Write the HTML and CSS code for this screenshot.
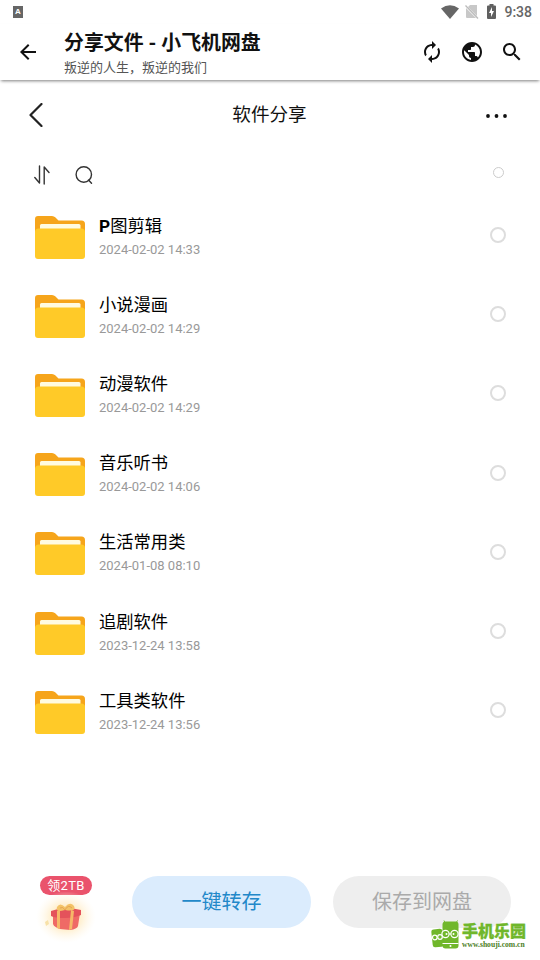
FILE: index.html
```html
<!DOCTYPE html>
<html lang="zh-CN">
<head>
<meta charset="utf-8">
<title>分享文件 - 小飞机网盘</title>
<link rel="stylesheet" href="styles.css">
</head>
<body>
<svg width="0" height="0" class="defs">
  <symbol id="folder" viewBox="0 0 50 43">
    <path fill="#f6a51b" d="M0 3Q0 0 3 0H17Q19 0 20.500 1.500L23.500 4.500H46.500Q50 4.500 50 8V30H0Z"/>
    <rect x="5" y="8" width="40.500" height="9" rx="1.500" fill="#fffbe0"/>
    <path fill="#ffca28" d="M0 16Q0 12.500 3.500 12.500H46.500Q50 12.500 50 16V40Q50 43 47 43H3Q0 43 0 40Z"/>
  </symbol>
</svg>
<div class="status">
  <span class="app-badge">A</span>
  <div class="status-right">
    <svg class="wifi" viewBox="0 0 18 14"><path fill="#666" d="M0 3.500Q9-3 18 3.500L9 14Z"/></svg>
    <svg class="sim" viewBox="0 0 14 15"><path fill="#c8c8c8" d="M5 1H12V12L3 3ZM1 4L11 14H2Q1 14 1 13Z"/><path stroke="#bbb" stroke-width="1.300" d="M.5 1.500L13 14.500"/></svg>
    <svg class="battery" viewBox="0 0 9 15"><path fill="#606060" d="M2.500 0H6.500V1.500H8Q9 1.500 9 2.500V14Q9 15 8 15H1Q0 15 0 14V2.500Q0 1.500 1 1.500H2.500Z"/><path fill="#fff" d="M5 3L2 9H4V13L7 7H5Z"/></svg>
    <span class="time">9:38</span>
  </div>
</div>
<header class="appbar">
  <svg class="back" viewBox="0 0 24 24"><path d="M20 11H7.830l5.590-5.590L12 4l-8 8 8 8 1.410-1.410L7.830 13H20v-2z"/></svg>
  <div class="titles">
    <h1>分享文件 - 小飞机网盘</h1>
    <p>叛逆的人生，叛逆的我们</p>
  </div>
  <div class="actions">
    <svg viewBox="0 0 24 24"><path d="M12 6v3l4-4-4-4v3c-4.420 0-8 3.580-8 8 0 1.570.46 3.030 1.240 4.260L6.700 14.800c-.45-.83-.7-1.790-.7-2.800 0-3.310 2.690-6 6-6zm6.760 1.740L17.300 9.200c.44.84.7 1.790.7 2.800 0 3.310-2.690 6-6 6v-3l-4 4 4 4v-3c4.420 0 8-3.580 8-8 0-1.570-.46-3.030-1.240-4.260z"/></svg>
    <svg viewBox="0 0 24 24"><path d="M12 2C6.480 2 2 6.480 2 12s4.480 10 10 10 10-4.480 10-10S17.520 2 12 2zm-1 17.930c-3.950-.49-7-3.850-7-7.930 0-.62.080-1.210.21-1.790L9 15v1c0 1.100.9 2 2 2v1.930zm6.900-2.540c-.26-.81-1-1.390-1.900-1.390h-1v-3c0-.55-.45-1-1-1H8v-2h2c.55 0 1-.45 1-1V7h2c1.100 0 2-.9 2-2v-.41c2.930 1.190 5 4.060 5 7.410 0 2.080-.8 3.970-2.100 5.390z"/></svg>
    <svg viewBox="0 0 24 24"><path d="M15.500 14h-.79l-.28-.27C15.410 12.590 16 11.110 16 9.500 16 5.910 13.090 3 9.500 3S3 5.910 3 9.500 5.910 16 9.500 16c1.610 0 3.090-.59 4.230-1.570l.27.280v.79l5 4.990L20.490 19l-4.990-5zm-6 0C7.010 14 5 11.990 5 9.500S7.010 5 9.500 5 14 7.010 14 9.500 11.990 14 9.500 14z"/></svg>
  </div>
</header>
<nav class="subnav">
  <svg class="chevron" viewBox="0 0 14 24"><path d="M12.500 1L1.500 12L12.500 23"/></svg>
  <h2>软件分享</h2>
  <svg class="more" viewBox="0 0 22 4"><circle cx="2" cy="2" r="1.900"/><circle cx="10.500" cy="2" r="1.900"/><circle cx="19" cy="2" r="1.900"/></svg>
</nav>
<div class="tools">
  <svg class="sort" viewBox="0 0 16 20"><path d="M5.500 1V18L.8 12.500M10.200 19V2L15 7.500"/></svg>
  <svg class="find" viewBox="0 0 18 18"><circle cx="8.800" cy="8.500" r="7.700"/><path d="M13.500 14L16.500 17.200"/></svg>
  <span class="radio small"></span>
</div>
<main class="list">
  <div class="row"><svg class="folder"><use href="#folder"/></svg><div class="info"><div class="name"><b>P</b>图剪辑</div><div class="date">2024-02-02 14:33</div></div><span class="radio"></span></div>
  <div class="row"><svg class="folder"><use href="#folder"/></svg><div class="info"><div class="name">小说漫画</div><div class="date">2024-02-02 14:29</div></div><span class="radio"></span></div>
  <div class="row"><svg class="folder"><use href="#folder"/></svg><div class="info"><div class="name">动漫软件</div><div class="date">2024-02-02 14:29</div></div><span class="radio"></span></div>
  <div class="row"><svg class="folder"><use href="#folder"/></svg><div class="info"><div class="name">音乐听书</div><div class="date">2024-02-02 14:06</div></div><span class="radio"></span></div>
  <div class="row"><svg class="folder"><use href="#folder"/></svg><div class="info"><div class="name">生活常用类</div><div class="date">2024-01-08 08:10</div></div><span class="radio"></span></div>
  <div class="row"><svg class="folder"><use href="#folder"/></svg><div class="info"><div class="name">追剧软件</div><div class="date">2023-12-24 13:58</div></div><span class="radio"></span></div>
  <div class="row"><svg class="folder"><use href="#folder"/></svg><div class="info"><div class="name">工具类软件</div><div class="date">2023-12-24 13:56</div></div><span class="radio"></span></div>
</main>
<footer class="bottom">
  <div class="gift">
    <span class="gift-tag">领2TB</span>
    <svg class="gift-box" viewBox="0 0 60 52">
      <defs><radialGradient id="glow"><stop offset="0" stop-color="#ffd98c"/><stop offset=".55" stop-color="#ffeecb" stop-opacity=".75"/><stop offset="1" stop-color="#fff8ea" stop-opacity="0"/></radialGradient></defs>
      <ellipse cx="30" cy="25" rx="30" ry="26" fill="url(#glow)"/>
      <g transform="translate(0 2)">
      <path fill="#ef6a66" d="M17 20L44 19L42 32Q41 35 34 36L24 35Q18 33 17 30Z"/>
      <path fill="#e4525b" d="M15 17L29 13L45 16V21Q38 24 29 24Q19 24 15 22Z"/>
      <path fill="#f6b868" d="M21 17L24 16L24 35L21 34ZM35 16L38 17L36 35L33 36Z"/>
      <path fill="#f3c368" d="M29 16Q19 19 21 13Q24 8 29 13Q34 7 38 12Q41 18 29 16Z"/>
      <path fill="none" stroke="#e7a552" d="M24 14Q27 12 29 16Q32 10 36 14"/>
      <path fill="#f8e1a8" d="M9 28L12 26L13 30L10 32Z"/>
      </g>
    </svg>
  </div>
  <button class="primary">一键转存</button>
  <button class="disabled">保存到网盘</button>
</footer>
<div class="watermark">
  <svg viewBox="0 0 30 30">
    <g fill="#70b72b">
      <path d="M14 3L13 .5M25 3L26.500 .5" stroke="#70b72b"/>
      <rect x="11.500" y="1.500" width="16" height="27" rx="3"/>
      <rect x="1" y="9" width="11" height="18" rx="2.500" transform="rotate(-6 7 18)"/>
    </g>
    <g fill="#70b72b" stroke="#fff" stroke-width="1.200"><circle cx="14.500" cy="14" r="3.600"/><circle cx="23.500" cy="14" r="3.600"/><circle cx="3.800" cy="17.500" r="2.300"/><circle cx="9" cy="17" r="2.300"/><path fill="none" d="M18 14H20M11.500 23.500H27.500"/></g>
    <circle cx="15.500" cy="14" r="1" fill="#fff"/><circle cx="22.500" cy="14" r="1" fill="#fff"/><circle cx="19.500" cy="26" r="1" fill="#fff"/>
  </svg>
  <div class="wm-text"><span class="wm-name">手机乐园</span><span class="wm-url">www.shouji.com.cn</span></div>
</div>
</body>
</html>
```
FILE: styles.css
```css
* { box-sizing: border-box; margin: 0; padding: 0; }
body { width: 540px; height: 960px; overflow: hidden; background: #fff; position: relative; font-family: Roboto, "Noto Sans CJK SC", sans-serif; color: #111; }
svg { display: block; flex: none; }
.defs { position: absolute; }
.status { height: 24px; display: flex; align-items: center; justify-content: space-between; padding: 0 8px 0 13px; }
.app-badge { width: 10px; height: 12px; background: #666; color: #fff; font: bold 8px/12px "Liberation Sans", sans-serif; text-align: center; }
.status-right { display: flex; align-items: center; margin-top: -1px; }
.wifi { width: 18px; height: 14px; margin-right: 6px; }
.sim { width: 14px; height: 15px; margin-right: 8px; }
.battery { width: 9px; height: 15px; margin-right: 8px; }
.time { font-size: 14px; line-height: 24px; color: #666; font-weight: 500; }
.appbar { height: 56px; display: flex; align-items: center; padding: 0 16.500px 0 16px; box-shadow: 0 2px 3px -1px rgba(0,0,0,.5); }
.appbar svg { width: 24px; height: 24px; fill: #111; }
.titles { margin-left: 24px; flex: 1; }
.titles h1 { font-size: 19.900px; line-height: 28px; font-weight: 700; margin-top: 3px; white-space: nowrap; }
.titles p { font-size: 13px; line-height: 20px; color: #555; }
.actions { display: flex; gap: 16px; }
.subnav { height: 70px; display: flex; justify-content: space-between; align-items: center; padding: 0 32px 0 29px; }
.chevron { width: 14px; height: 24px; fill: none; stroke: #222; stroke-width: 2.200; stroke-linecap: round; stroke-linejoin: round; }
.subnav h2 { font-size: 18.600px; font-weight: 400; line-height: 26px; margin-left: 10px; }
.more { width: 22px; height: 4px; margin-top: 2px; fill: #111; }
.tools { height: 47px; display: flex; align-items: center; padding: 0 36px 0 34px; }
.tools svg { fill: none; stroke: #333; stroke-width: 1.400; stroke-linecap: round; stroke-linejoin: round; }
.sort { width: 16px; height: 20px; margin-top: 2px; }
.find { width: 18px; height: 18px; margin: 3px 0 0 25px; }
.radio { width: 16px; height: 16px; border: 2px solid #ddd; border-radius: 50%; margin: -3px 0 0 auto; }
.radio.small { width: 11px; height: 11px; border: 1px solid #ccc; margin-top: -2px; }
.row { height: 79.200px; display: flex; align-items: center; padding: 0 34px 0 35px; }
.folder { width: 50px; height: 43px; margin-top: 1px; }
.info { margin-left: 14px; }
.name { font-size: 17.300px; line-height: 24px; color: #000; }
.date { font-size: 13px; line-height: 20px; color: #999; margin-top: 2px; }
.bottom { display: flex; height: 80px; margin-top: 125px; padding: 0 29px 0 36px; }
.gift { width: 60px; margin-right: 36px; }
.gift-tag { display: block; width: 52px; height: 19px; margin-left: 4px; border-radius: 10px; background: #ea536c; color: #fff; font-size: 13px; line-height: 19px; text-align: center; letter-spacing: .3px; }
.gift-box { width: 60px; height: 52px; margin-top: -3px; }
.bottom button { width: 179px; height: 52px; border: 0; border-radius: 26px; font: 400 20px/52px Roboto, "Noto Sans CJK SC", sans-serif; }
.primary { background: #dbecfd; color: #2288c9; margin-right: 22px; }
.bottom .disabled { background: #eee; color: #aaa; width: 178px; }
.watermark { position: absolute; left: 431px; top: 920px; display: flex; color: #70b72b; }
.watermark svg { width: 30px; height: 30px; }
.wm-text { display: flex; flex-direction: column; width: 65px; }
.wm-name { font: 900 16px/20px "Noto Sans CJK SC", sans-serif; margin-left: 1px; -webkit-text-stroke: .3px #70b72b; white-space: nowrap; }
.wm-url { font: bold 7.600px/8px "Liberation Serif", serif; color: #4b7e24; margin: 1px 0 0 1px; white-space: nowrap; }
```
